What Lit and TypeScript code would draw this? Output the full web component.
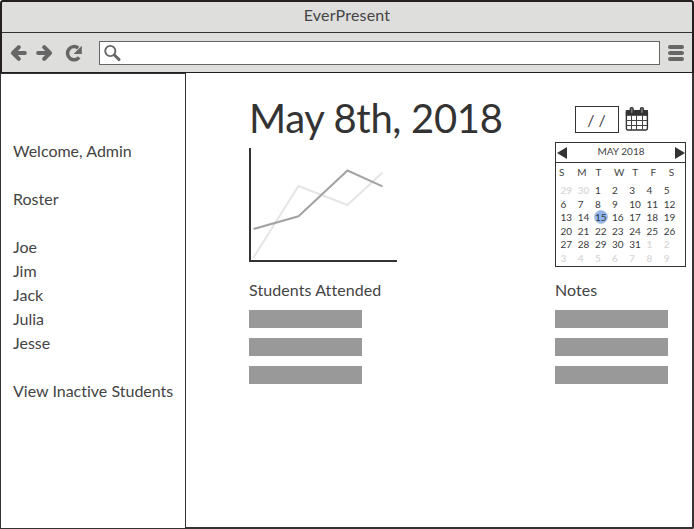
import { LitElement, html, css } from "lit";
import { customElement } from "lit/decorators.js";
import { classMap } from "lit/directives/class-map.js";

const STUDENTS = ["Joe", "Jim", "Jack", "Julia", "Jesse"];
const WEEKDAYS = ["S", "M", "T", "W", "T", "F", "S"];

@customElement("browser-bar")
class BrowserBar extends LitElement {
  static styles = css`
    :host { display: block; box-sizing: border-box; height: 73px; background: #dededc;
      border: 2px solid #231f20; border-bottom: 1px solid #231f20; border-radius: 3px 3px 0 0; }
    .title { box-sizing: border-box; height: 31px; line-height: 26px; text-align: center; font-size: 16px;
      letter-spacing: 0.2px; border-bottom: 1px solid #333; }
    .tools { display: flex; align-items: center; height: 39px; }
    .nav { display: block; flex: none; width: 97px; height: 39px; }
    .address { box-sizing: border-box; width: 561px; height: 24px; background: #fff; border: 1px solid #666; }
    .address svg { display: block; }
    .menu { display: flex; flex-direction: column; gap: 2px; margin-left: 8px; }
    .menu i { width: 16px; height: 4px; border-radius: 2px; background: #666; }
  `;
  render() {
    return html`
      <div class="title">EverPresent</div>
      <div class="tools">
        <svg class="nav" viewBox="2 33 97 39" fill="none" stroke="#666" stroke-width="4.1" stroke-linecap="round" stroke-linejoin="round">
          <path d="M18.8 47.1L13 53L18.8 58.9M14 53H24.8" />
          <path d="M44.2 47.1L50 53L44.2 58.9M49 53H38.2" />
          <path d="M79.2 57.4A6.6 6.6 0 1 1 78.2 48" stroke-width="3.5" stroke-linecap="butt" />
          <path d="M81.8 45.8V53.9H73.6Z" fill="#666" stroke="none" />
        </svg>
        <div class="address">
          <svg width="24" height="22" viewBox="100 42 24 22" fill="none" stroke="#666">
            <circle cx="110.3" cy="51" r="5.1" stroke-width="1.9" />
            <path d="M114.4 55L119.1 59.6" stroke-width="2.9" stroke-linecap="round" />
          </svg>
        </div>
        <div class="menu"><i></i><i></i><i></i></div>
      </div>`;
  }
}

@customElement("month-calendar")
class MonthCalendar extends LitElement {
  static styles = css`
    :host { display: block; box-sizing: border-box; width: 131px; height: 125px; border: 1px solid #333; font-size: 10px; }
    .head { display: flex; justify-content: space-between; align-items: center; box-sizing: border-box; height: 20px;
      border-bottom: 1px solid #333; padding: 0 0 0 1px; }
    .head span { padding-bottom: 3px; }
    .week { display: grid; grid-template-columns: repeat(7, 18.3px); padding: 2px 0 1px 3px; height: 15px; line-height: 15px; }
    .days { display: grid; grid-template-columns: repeat(7, 17.2px); grid-auto-rows: 13.6px; line-height: 13.6px;
      padding: 3px 0 0 4.5px; }
    .day { position: relative; color: #3a3a3a; }
    .day.muted { color: #dadada; font-weight: 700; }
    .picked { z-index: 0; }
    .picked::before { content: ""; position: absolute; z-index: -1; left: -0.8px; top: -0.8px; box-sizing: border-box;
      width: 14px; height: 14px; border-radius: 50%; background: #8fb5ee; border: 1px solid #b5c5dd; }
  `;
  render() {
    const days = Array.from({ length: 42 }, (_, i) => {
      const n = i - 1;
      return { label: n < 1 ? n + 30 : n > 31 ? n - 31 : n, muted: n < 1 || n > 31, picked: n === 15 };
    });
    return html`
      <div class="head">
        <svg width="10" height="12" fill="#333"><path d="M0 6L10 0V12Z" /></svg>
        <span>MAY 2018</span>
        <svg width="10" height="12" fill="#333"><path d="M10 6L0 0V12Z" /></svg>
      </div>
      <div class="week">${WEEKDAYS.map((d) => html`<span>${d}</span>`)}</div>
      <div class="days">
        ${days.map((d) => html`<span class=${classMap({ day: true, muted: d.muted, picked: d.picked })}>${d.label}</span>`)}
      </div>`;
  }
}

@customElement("bar-list")
class BarList extends LitElement {
  static properties = { heading: {} };
  declare heading: string;
  static styles = css`
    :host { display: block; font-size: 16px; line-height: 24px; letter-spacing: 0.08px; }
    .bars { display: grid; gap: 10px; margin-top: 8px; }
    .bar { width: 113px; height: 18px; background: #999; }
  `;
  render() {
    return html`<div>${this.heading}</div>
      <div class="bars">${[0, 1, 2].map(() => html`<div class="bar"></div>`)}</div>`;
  }
}

@customElement("app-root")
class AppRoot extends LitElement {
  static styles = css`
    :host { display: flex; flex-direction: column; width: 694px; height: 529px; background: #fff; color: #444;
      font-family: Lato, "Liberation Sans", sans-serif; font-variant-ligatures: none; }
    .body { flex: 1; display: flex; }
    .side { box-sizing: border-box; width: 186px; border: 1px solid #333; padding: 65px 0 0 12px; font-size: 16px;
      line-height: 24px; white-space: nowrap; }
    .block { margin-bottom: 24px; }
    .main { box-sizing: border-box; flex: 1; display: grid; grid-template-columns: 306px 131px; align-content: start;
      padding-left: 63px; border-right: 2px solid #333; border-bottom: 2px solid #333; border-radius: 0 0 2px 0; }
    h1 { margin: 0; padding-top: 20px; font-size: 40px; line-height: 50px; font-weight: 400; letter-spacing: -0.33px;
      white-space: nowrap; color: #333; }
    .chart { display: block; margin-top: 4px; }
    .picker { display: flex; align-items: flex-start; height: 36px; padding: 33px 0 0 20px; }
    .date { box-sizing: border-box; width: 44px; height: 27px; border: 1px solid #333; text-align: center;
      font-size: 16px; line-height: 25px; margin-right: 6px; padding-right: 1px; }
    .lists { margin-top: 11px; }
  `;
  render() {
    return html`
      <browser-bar></browser-bar>
      <div class="body">
        <div class="side">
          <div class="block">Welcome, Admin</div>
          <div class="block">Roster</div>
          <div class="block">${STUDENTS.map((s) => html`<div>${s}</div>`)}</div>
          <div>View Inactive Students</div>
        </div>
        <div class="main">
          <div>
            <h1>May 8th, 2018</h1>
            <svg class="chart" width="150" height="120" viewBox="249 147 150 120" fill="none" stroke-width="2">
              <path d="M253.5 257.5L298.5 186L347.5 205L382.5 172.5" stroke="#e5e5e5" />
              <path d="M253.5 229L298.5 216.3L347.5 170.5L382.5 186.3" stroke="#a3a3a3" />
              <path d="M250 148V261H397" stroke="#333" />
            </svg>
          </div>
          <div>
            <div class="picker">
              <div class="date">/ /</div>
              <svg width="24" height="26" viewBox="0 0 24 26">
                <rect x="1.4" y="4.8" width="21" height="19.2" rx="1.4" fill="#fff" stroke="#333" stroke-width="1.4" />
                <path d="M0.8 4.2h22.2v5.6h-22.2z" fill="#333" />
                <path d="M6.5 9v15M11.5 9v15M17.5 9v15M1 14.5h21M1 19.5h21" stroke="#444" fill="none" />
                <rect x="5.2" y="1.6" width="3" height="6" rx="1.4" fill="#777" stroke="#333" stroke-width="1.2" />
                <rect x="15.4" y="1.6" width="3" height="6" rx="1.4" fill="#777" stroke="#333" stroke-width="1.2" />
              </svg>
            </div>
            <month-calendar></month-calendar>
          </div>
          <bar-list class="lists" heading="Students Attended"></bar-list>
          <bar-list class="lists" heading="Notes"></bar-list>
        </div>
      </div>`;
  }
}
